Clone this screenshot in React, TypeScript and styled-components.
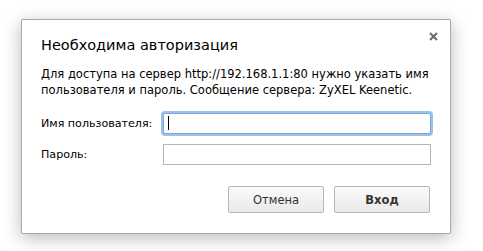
import styled, { createGlobalStyle } from "styled-components";

const GlobalStyle = createGlobalStyle`
  html, body {
    margin: 0;
    padding: 0;
    background: #ffffff;
  }
  body {
    font-family: "DejaVu Sans", "Liberation Sans", sans-serif;
    color: #000;
  }
`;

const Page = styled.div`
  width: 483px;
  height: 251px;
  padding: 19px 0 0 21px;
  box-sizing: border-box;
`;

const Dialog = styled.div`
  position: relative;
  width: 430px;
  height: 215px;
  box-sizing: border-box;
  background: #fff;
  border: 1px solid #a9a9a9;
  border-radius: 2px;
  box-shadow: 0 4px 18px rgba(0, 0, 0, 0.28);
  padding: 15px 20px 0 19px;
`;

const Close = styled.button`
  position: absolute;
  top: 9px;
  right: 10px;
  width: 14px;
  height: 14px;
  padding: 0;
  border: 0;
  background: none;
  display: flex;
  align-items: center;
  justify-content: center;
`;

const Title = styled.h1`
  margin: 0;
  font-size: 14.5px;
  font-weight: normal;
  line-height: 20px;
`;

const Message = styled.p`
  margin: 11px 0 0;
  font-size: 11.5px;
  line-height: 16px;
  white-space: nowrap;
`;

const Form = styled.div`
  margin-top: 15px;
  display: grid;
  grid-template-columns: 122px 268px;
  row-gap: 10px;
  align-items: center;
`;

const Label = styled.label`
  font-size: 11.1px;
`;

const Field = styled.div`
  position: relative;
  display: flex;
`;

const Input = styled.input<{ $focused?: boolean }>`
  flex: 1;
  min-width: 0;
  height: 21px;
  box-sizing: border-box;
  border: 1px solid ${(p) => (p.$focused ? "#7aa7d8" : "#b5b5b5")};
  box-shadow: ${(p) => (p.$focused ? "0 0 0 2px #9ec1e8" : "none")};
  border-radius: ${(p) => (p.$focused ? "2px" : "0")};
  outline: none;
  padding: 0 4px;
  font-size: 12px;
`;

const Caret = styled.span`
  position: absolute;
  left: 5px;
  top: 3px;
  width: 1px;
  height: 14px;
  background: #000;
`;

const Actions = styled.div`
  margin-top: 21px;
  display: flex;
  justify-content: flex-end;
  gap: 10px;
`;

const Button = styled.button<{ $primary?: boolean }>`
  width: 96px;
  height: 27px;
  border: 1px solid #b7b7b7;
  border-radius: 2px;
  background: linear-gradient(#fafafa, #e9e9e9);
  font-family: "DejaVu Sans", "Liberation Sans", sans-serif;
  font-size: 11.5px;
  font-weight: ${(p) => (p.$primary ? "bold" : "normal")};
  color: #333;
  padding: 0;
`;

export default function App() {
  return (
    <Page>
      <GlobalStyle />
      <Dialog>
        <Close aria-label="close">
          <svg width="9" height="9" viewBox="0 0 9 9">
            <path d="M1 1 L8 8 M8 1 L1 8" stroke="#6a6a6a" strokeWidth="2" />
          </svg>
        </Close>
        <Title>Необходима авторизация</Title>
        <Message>
          Для доступа на сервер http://192.168.1.1:80 нужно указать имя
          <br />
          пользователя и пароль. Сообщение сервера: ZyXEL Keenetic.
        </Message>
        <Form>
          <Label>Имя пользователя:</Label>
          <Field>
            <Input $focused />
            <Caret />
          </Field>
          <Label>Пароль:</Label>
          <Field>
            <Input type="password" />
          </Field>
        </Form>
        <Actions>
          <Button>Отмена</Button>
          <Button $primary>Вход</Button>
        </Actions>
      </Dialog>
    </Page>
  );
}
